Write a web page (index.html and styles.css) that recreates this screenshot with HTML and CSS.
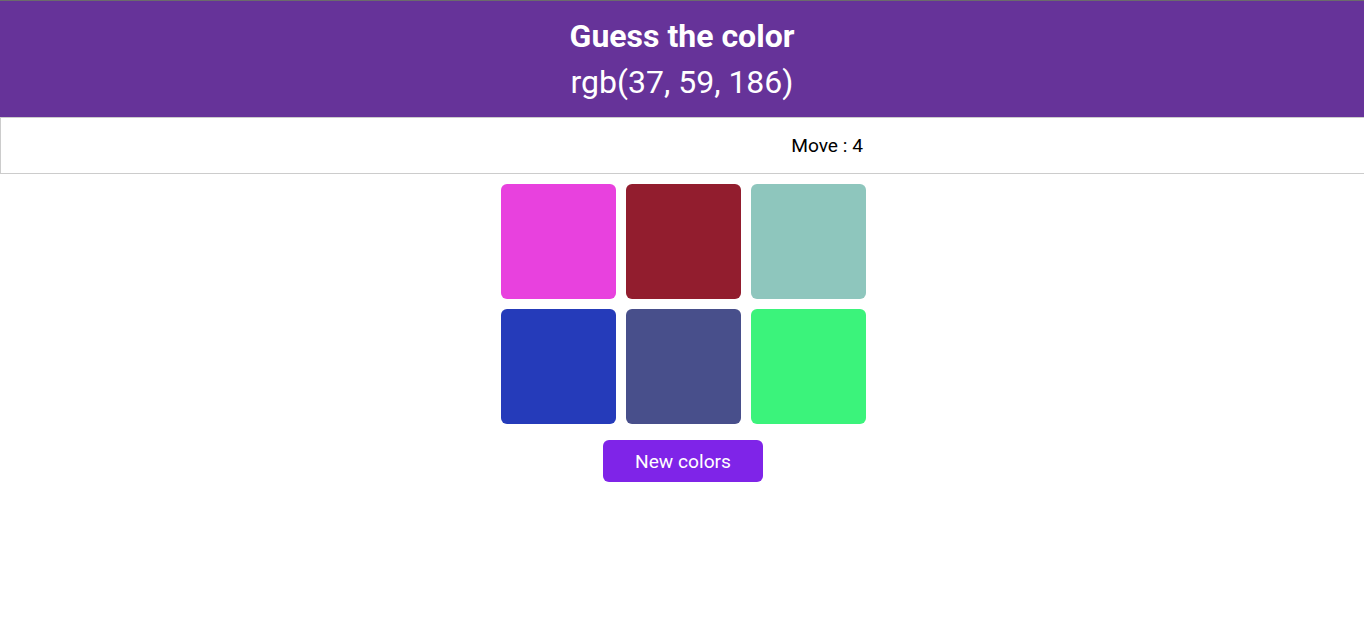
FILE: index.html
```html
<!DOCTYPE html>
<html>
<head>
<meta charset="utf-8">
<link rel="stylesheet" href="styles.css">
</head>
<body>
<header class="header">
  <h1 class="title">Guess the color</h1>
  <div class="target">rgb(37, 59, 186)</div>
</header>
<div class="status">
  <div class="status-inner">Move : 4</div>
</div>
<main class="game">
  <div class="grid">
    <div class="tile" style="background: rgb(232, 65, 222)"></div>
    <div class="tile" style="background: rgb(146, 29, 46)"></div>
    <div class="tile" style="background: rgb(142, 198, 189)"></div>
    <div class="tile" style="background: rgb(37, 59, 186)"></div>
    <div class="tile" style="background: rgb(72, 79, 139)"></div>
    <div class="tile" style="background: rgb(59, 243, 123)"></div>
  </div>
  <button class="new-btn">New colors</button>
</main>
</body>
</html>
```
FILE: styles.css
```css
html, body {
  margin: 0;
  padding: 0;
}
body {
  font-family: Roboto, "Liberation Sans", sans-serif;
  background: #fff;
  border-top: 1px solid #6b6b6b;
  overflow: hidden;
}
.header {
  background: #663399;
  color: #fff;
  text-align: center;
  height: 116px;
  box-sizing: border-box;
  padding-top: 15px;
}
.title {
  margin: 0;
  font-size: 32px;
  font-weight: 700;
  line-height: 40px;
}
.target {
  font-size: 32px;
  line-height: 44px;
  margin-top: 4px;
}
.status {
  border: 1px solid #cccccc;
  border-right: none;
  height: 55px;
  display: flex;
  justify-content: center;
  align-items: center;
  padding-left: 2px;
}
.status-inner {
  width: 365px;
  text-align: right;
  padding-right: 3px;
  box-sizing: border-box;
  font-size: 19.2px;
  color: #000;
}
.game {
  display: flex;
  flex-direction: column;
  align-items: center;
  padding-top: 10px;
  padding-left: 2px;
}
.grid {
  display: grid;
  grid-template-columns: repeat(3, 115px);
  grid-auto-rows: 115px;
  gap: 10px;
}
.tile {
  border-radius: 6px;
}
.new-btn {
  margin-top: 16px;
  width: 160px;
  height: 42px;
  border: none;
  border-radius: 6px;
  background: #7f24e8;
  color: #fff;
  font-family: Roboto, "Liberation Sans", sans-serif;
  font-size: 19.2px;
  cursor: pointer;
}
```
